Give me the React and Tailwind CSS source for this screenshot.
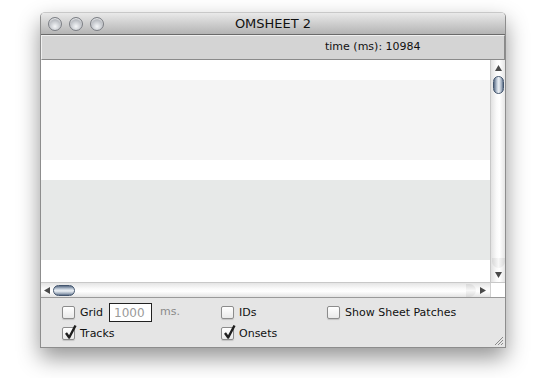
import React from "react";

const font = { fontFamily: '"DejaVu Sans", Verdana, sans-serif' };

function Light() {
  return (
    <div className="w-[14px] h-[14px] rounded-full border border-[#7b7e84] bg-[radial-gradient(circle_at_50%_70%,#f4f6f8_0%,#c9ccd1_45%,#8e9299_100%)] shadow-[inset_0_1px_1px_rgba(255,255,255,0.8)]" />
  );
}

function Check({ checked, label }) {
  return (
    <div className="flex items-center gap-[5px] h-[16px]">
      <div className="relative w-[13px] h-[13px] rounded-[2px] border border-[#8c8c8c] bg-[linear-gradient(#ffffff,#e9e9e9)] shadow-[0_1px_1px_rgba(0,0,0,0.15)]">
        {checked && (
          <svg className="absolute left-[1px] top-[-4px]" width="13" height="16" viewBox="0 0 13 16">
            <path d="M2 9 L5.2 13.5 L11.5 1.5" fill="none" stroke="#1e1e1e" strokeWidth="2.4" strokeLinejoin="round" />
          </svg>
        )}
      </div>
      <span className="text-[11px] text-[#111] leading-none">{label}</span>
    </div>
  );
}

function Tri({ dir }) {
  const paths = {
    up: "M0 6 L3.5 0 L7 6 Z",
    down: "M0 0 L7 0 L3.5 6 Z",
    left: "M6 0 L6 7 L0 3.5 Z",
    right: "M0 0 L0 7 L6 3.5 Z",
  };
  const vertical = dir === "up" || dir === "down";
  return (
    <svg width={vertical ? 7 : 6} height={vertical ? 6 : 7} viewBox={vertical ? "0 0 7 6" : "0 0 6 7"}>
      <path d={paths[dir]} fill="#4a4a4a" />
    </svg>
  );
}

export default function App() {
  const rows = [
    { h: "h-[20px]", c: "bg-white" },
    { h: "h-[80px]", c: "bg-[#f4f4f4]" },
    { h: "h-[20px]", c: "bg-white" },
    { h: "h-[80px]", c: "bg-[#e7e9e8]" },
    { h: "h-[22px]", c: "bg-white" },
  ];

  return (
    <div className="min-h-screen bg-white pt-[12px] pl-[40px]" style={font}>
      <div className="w-[466px] h-[336px] flex flex-col rounded-t-[5px] border border-[#8d8d8d] border-t-[#c8c8c8] shadow-[0_10px_22px_rgba(0,0,0,0.42)] overflow-hidden">
        {/* title bar */}
        <div className="relative h-[22px] flex items-center bg-[linear-gradient(#e9e9e9,#b4b4b4)] border-b border-[#6a6a6a]">
          <div className="flex gap-[7px] pl-[7px]">
            <Light />
            <Light />
            <Light />
          </div>
          <div className="absolute inset-0 flex items-center justify-center text-[13px] text-[#111]">OMSHEET 2</div>
        </div>

        {/* info bar */}
        <div className="h-[25px] flex items-center bg-[#d4d4d4] border border-[#f0f0f0] border-r-[#8a8a8a] border-b-[#8a8a8a] pl-[283px] text-[11px] text-[#111]">
          time (ms): 10984
        </div>

        {/* content */}
        <div className="h-[222px] flex">
          <div className="flex-1 flex flex-col">
            {rows.map((r, i) => (
              <div key={i} className={`${r.h} ${r.c}`} />
            ))}
          </div>
          <div className="w-[15px] flex flex-col items-center bg-[linear-gradient(90deg,#e2e2e2,#fafafa_40%,#ffffff_60%,#e6e6e6)] border-l border-[#c8c8c8]">
            <div className="h-[14px] flex items-center justify-center pt-[2px]">
              <Tri dir="up" />
            </div>
            <div className="mt-[2px] w-[11px] h-[18px] rounded-full border border-[#44566e] bg-[linear-gradient(90deg,#5b6d86,#c9d3df_35%,#eef2f6_55%,#9aa8ba_85%,#5b6d86)]" />
            <div className="flex-1" />
            <div className="w-[13px] h-[10px] rounded-b-full bg-[linear-gradient(90deg,#d8d8d8,#f7f7f7,#d8d8d8)]" />
            <div className="h-[14px] flex items-center justify-center">
              <Tri dir="down" />
            </div>
          </div>
        </div>

        {/* horizontal scroll */}
        <div className="h-[15px] flex border-t border-[#c8c8c8]">
          <div className="flex-1 flex items-center bg-[linear-gradient(#e4e4e4,#fafafa_40%,#ffffff_60%,#e4e4e4)]">
            <div className="w-[12px] flex justify-center">
              <Tri dir="left" />
            </div>
            <div className="w-[22px] h-[11px] rounded-full border border-[#44566e] bg-[linear-gradient(#5b6d86,#c9d3df_35%,#eef2f6_55%,#9aa8ba_85%,#5b6d86)]" />
            <div className="flex-1" />
            <div className="w-[10px] h-[13px] rounded-r-full bg-[linear-gradient(#d8d8d8,#f7f7f7,#d8d8d8)]" />
            <div className="w-[14px] flex justify-center">
              <Tri dir="right" />
            </div>
          </div>
          <div className="w-[15px] bg-white border-l border-[#d0d0d0]" />
        </div>

        {/* options */}
        <div className="relative flex-1 bg-[#e5e5e5] border-t border-[#9a9a9a] pl-[21px] pt-[5px]">
          <div className="grid grid-cols-[159px_106px_auto] gap-y-[3px]">
            <div className="flex items-center">
              <Check label="Grid" />
              <div className="ml-[6px] w-[43px] h-[19px] border border-[#222] bg-white text-[12px] text-[#9a9a9a] pl-[4px] flex items-center">1000</div>
              <span className="ml-[8px] text-[11px] text-[#8a8a8a]">ms.</span>
            </div>
            <div className="flex items-center">
              <Check label="IDs" />
            </div>
            <div className="flex items-center">
              <Check label="Show Sheet Patches" />
            </div>
            <div className="flex items-center">
              <Check checked label="Tracks" />
            </div>
            <div className="flex items-center">
              <Check checked label="Onsets" />
            </div>
          </div>
          <svg className="absolute right-[1px] bottom-[1px]" width="11" height="11" viewBox="0 0 11 11">
            <path d="M10 2 L2 10 M10 5 L5 10 M10 8 L8 10" stroke="#8a8a8a" strokeWidth="1" />
          </svg>
        </div>
      </div>
    </div>
  );
}
